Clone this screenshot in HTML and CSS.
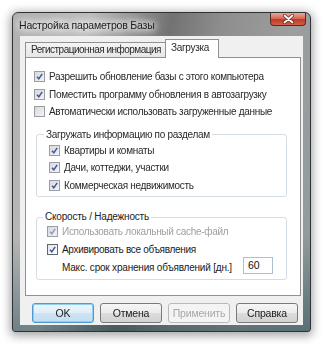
FILE: index.html
```html
<!DOCTYPE html>
<html>
<head>
<meta charset="utf-8">
<link rel="stylesheet" href="styles.css">
</head>
<body>
<div class="window">
  <div class="titlebar">
    <span class="title">Настройка параметров Базы</span>
    <div class="close">
      <svg width="13" height="10" viewBox="0 0 13 10"><path d="M2.5 1.5 L10.5 8.5 M10.5 1.5 L2.5 8.5" stroke="#5a2020" stroke-width="3.2" stroke-linecap="round"/><path d="M2.5 1.5 L10.5 8.5 M10.5 1.5 L2.5 8.5" stroke="#ffffff" stroke-width="1.8" stroke-linecap="round"/></svg>
    </div>
  </div>
  <div class="client">
    <div class="tabs">
      <div class="tab soft">Регистрационная информация</div>
      <div class="tab active soft">Загрузка</div>
    </div>
    <div class="panel">
      <div class="row soft"><span class="cb checked"><svg viewBox="0 0 9 9"><path d="M2 4.8 L3.8 6.8 L7.2 1.8"/></svg></span>Разрешить обновление базы с этого компьютера</div>
      <div class="row soft"><span class="cb checked"><svg viewBox="0 0 9 9"><path d="M2 4.8 L3.8 6.8 L7.2 1.8"/></svg></span>Поместить программу обновления в автозагрузку</div>
      <div class="row soft"><span class="cb"></span>Автоматически использовать загруженные данные</div>
      <fieldset class="group g1">
        <legend class="soft">Загружать информацию по разделам</legend>
        <div class="row soft"><span class="cb checked"><svg viewBox="0 0 9 9"><path d="M2 4.8 L3.8 6.8 L7.2 1.8"/></svg></span>Квартиры и комнаты</div>
        <div class="row soft"><span class="cb checked"><svg viewBox="0 0 9 9"><path d="M2 4.8 L3.8 6.8 L7.2 1.8"/></svg></span>Дачи, коттеджи, участки</div>
        <div class="row soft"><span class="cb checked"><svg viewBox="0 0 9 9"><path d="M2 4.8 L3.8 6.8 L7.2 1.8"/></svg></span>Коммерческая недвижимость</div>
      </fieldset>
      <fieldset class="group g2">
        <legend>Скорость / Надежность</legend>
        <div class="row disabled"><span class="cb checked dis"><svg viewBox="0 0 9 9"><path d="M2 4.8 L3.8 6.8 L7.2 1.8"/></svg></span>Использовать локальный cache-файл</div>
        <div class="row"><span class="cb checked sharp"><svg viewBox="0 0 9 9"><path d="M2 4.8 L3.8 6.8 L7.2 1.8"/></svg></span>Архивировать все объявления</div>
        <div class="row field-row"><span class="field-label">Макс. срок хранения объявлений [дн.]</span><span class="input">60</span></div>
      </fieldset>
    </div>
    <div class="buttons soft">
      <div class="btn default">OK</div>
      <div class="btn">Отмена</div>
      <div class="btn disabled-btn">Применить</div>
      <div class="btn">Справка</div>
    </div>
  </div>
</div>
</body>
</html>
```

FILE: styles.css
```css
html, body {
  margin: 0;
  padding: 0;
  background: #ffffff;
}
body {
  padding: 12px;
  font-family: "Liberation Sans", Arial, sans-serif;
  font-size: 10px;
  color: #1e1e1e;
}
.window {
  box-sizing: border-box;
  width: 299px;
  height: 320px;
  border: 1px solid #2e3436;
  border-radius: 6px 6px 3px 3px;
  background:
    linear-gradient(180deg, rgba(255,255,255,0.0) 0%, rgba(255,255,255,0) 70%, rgba(20,60,70,0.45) 100%),
    linear-gradient(100deg, #b0b0b0 0%, #bdbdbd 22%, #727272 45%, #8e8e8e 60%, #9e9e9e 80%, #8d9a9c 100%);
  box-shadow: 0 2px 10px 2px rgba(0,0,0,0.35);
  display: flex;
  flex-direction: column;
  filter: blur(0.25px);
}
.titlebar {
  height: 23px;
  display: flex;
  align-items: flex-start;
  padding-left: 6px;
}
.title {
  margin-top: 6px;
  font-size: 10.5px;
  letter-spacing: -0.2px;
  color: #1b1b1b;
  text-shadow: 0 0 6px #f2f2f2, 0 0 8px #ffffff, 0 0 10px #ffffff;
  filter: blur(0.35px);
}
.close {
  margin-left: auto;
  margin-right: 4px;
  width: 36px;
  height: 13px;
  box-sizing: border-box;
  border: 1px solid #5a2a22;
  border-top: none;
  border-radius: 0 0 4px 4px;
  background: linear-gradient(180deg, #e8a898 0%, #d86a55 45%, #c03a26 55%, #d0604a 100%);
  display: flex;
  align-items: center;
  justify-content: center;
  filter: blur(0.4px);
}
.client {
  margin: 0 7px 0 7px;
  height: 289px;
  background: #f0f0f0;
  padding: 3px 3px 0 5px;
  box-sizing: border-box;
}
.tabs {
  display: flex;
  align-items: flex-end;
  height: 18px;
  position: relative;
  z-index: 1;
}
.tab {
  box-sizing: border-box;
  height: 15px;
  border: 1px solid #8e9297;
  border-bottom: none;
  background: linear-gradient(180deg, #f4f4f4, #e6e6e6);
  padding: 0 3px 0 5px;
  line-height: 14px;
  width: 141px;
  color: #2a2a2a;
  white-space: nowrap;
  letter-spacing: -0.5px;
  overflow: hidden;
}
.tab.active {
  height: 19px;
  margin-bottom: -1px;
  width: 54px;
  margin-left: -1px;
  background: #ffffff;
  line-height: 15px;
  padding-left: 5px;
  letter-spacing: -0.3px;
}
.panel {
  box-sizing: border-box;
  width: 276px;
  height: 239px;
  border: 1px solid #8e9297;
  background: #ffffff;
  padding: 10px 0 0 8px;
}
.soft {
  filter: blur(0.45px);
}
.row {
  display: flex;
  align-items: center;
  height: 17.5px;
  white-space: nowrap;
  color: #2a2a2a;
  letter-spacing: -0.3px;
}
.cb {
  box-sizing: border-box;
  width: 11px;
  height: 11px;
  border: 1px solid #9a9ea4;
  background: linear-gradient(135deg, #d9d9d9, #f3f3f3);
  margin-right: 4px;
  flex: none;
  display: flex;
  align-items: center;
  justify-content: center;
}
.cb svg {
  width: 9px;
  height: 9px;
}
.cb svg path {
  fill: none;
  stroke: #3d55a0;
  stroke-width: 1.5;
}
.cb.sharp {
  border-color: #5e6670;
  background: linear-gradient(135deg, #e2e4e8, #ffffff);
}
.cb.dis svg path {
  stroke: #8a9ac8;
}
.row.disabled {
  color: #9a9a9a;
  filter: blur(0.7px);
}
.group {
  margin: 8px 0 0 2px;
  width: 251px;
  box-sizing: border-box;
  border: 1px solid #d5dde4;
  border-radius: 3px;
  padding: 1px 0 2px 12px;
}
.group legend {
  padding: 0 2px;
  margin-left: -5px;
  line-height: 12px;
  color: #2a2a2a;
  letter-spacing: -0.3px;
}
.g2 {
  margin-top: 14px;
  padding: 0 0 2px 10px;
}
.g2 legend {
  font-size: 10px;
  margin-left: -4px;
  color: #222;
  letter-spacing: -0.2px;
}
.g2 .row {
  font-size: 10px;
  color: #1a1a1a;
  letter-spacing: -0.3px;
}
.g2 .row.disabled {
  color: #a0a0a0;
}
.field-row {
  height: 19px;
}
.field-label {
  padding-left: 15px;
  letter-spacing: -0.2px;
}
.input {
  box-sizing: border-box;
  margin-left: auto;
  margin-right: 13px;
  margin-top: -4px;
  width: 30px;
  height: 17px;
  border: 1px solid #a9c0d8;
  padding: 1px 0 0 4px;
  font-size: 10.5px;
  color: #111;
  letter-spacing: 0;
}
.buttons {
  display: flex;
  gap: 6px;
  margin-top: 7px;
  margin-left: 7px;
}
.btn {
  box-sizing: border-box;
  width: 62px;
  height: 20px;
  border: 1px solid #7a7a7a;
  border-radius: 3px;
  background: linear-gradient(180deg, #f6f6f6 0%, #ebebeb 48%, #dcdcdc 52%, #d2d2d2 100%);
  display: flex;
  align-items: center;
  justify-content: center;
  font-size: 10.5px;
  letter-spacing: -0.2px;
  color: #222;
}
.btn.default {
  border-color: #4b9ad0;
  box-shadow: inset 0 0 0 1px #8fd0f0;
  background: linear-gradient(180deg, #eef6fb 0%, #e0eef8 48%, #cce4f3 52%, #c4def2 100%);
}
.btn.disabled-btn {
  border-color: #b8b8b8;
  background: #f4f4f4;
  color: #a8a8a8;
}
```
